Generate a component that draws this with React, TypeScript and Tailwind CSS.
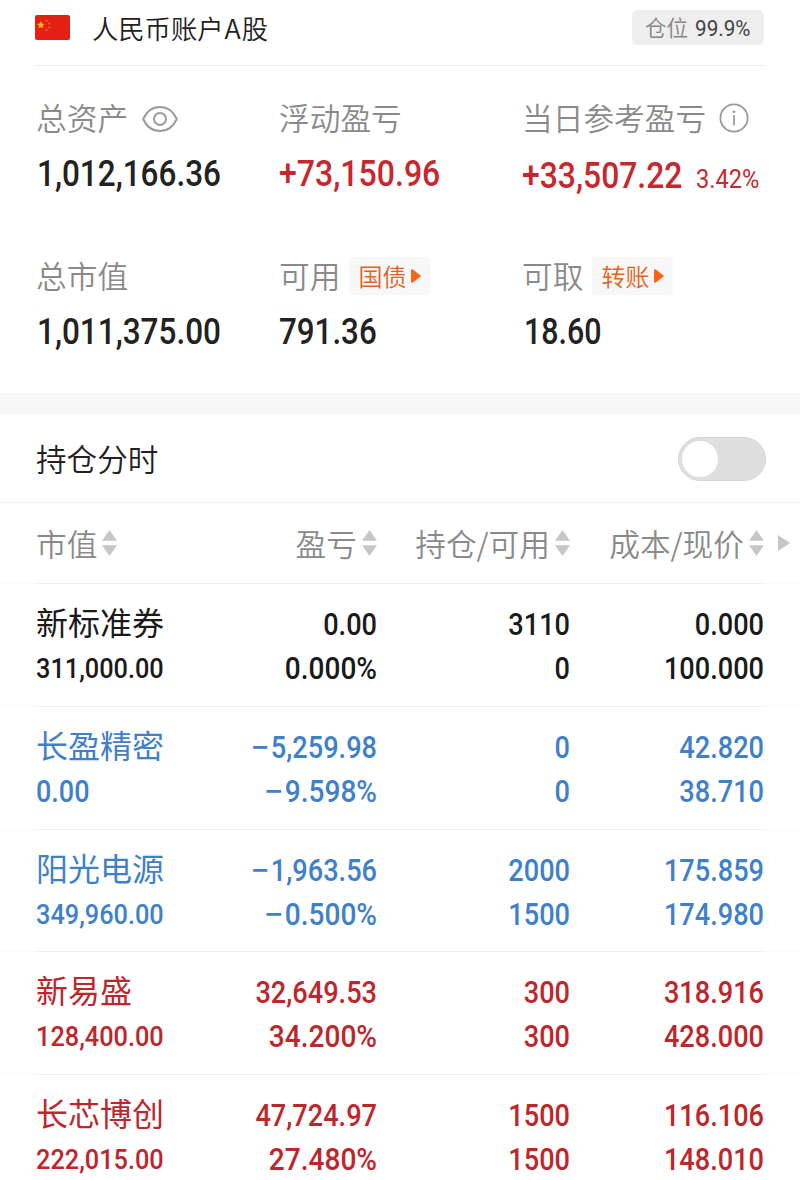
import { useState } from 'react';
import type { ReactNode } from 'react';

interface Holding {
  name: string;
  value: string;
  profit: string;
  profitRate: string;
  qty: string;
  available: string;
  cost: string;
  price: string;
  color: string;
}

const BLACK = 'text-[#1a1a1a]';
const BLUE = 'text-[#3f80cb]';
const RED = 'text-[#be262b]';

const holdings: Holding[] = [
  { name: '新标准券', value: '311,000.00', profit: '0.00', profitRate: '0.000%', qty: '3110', available: '0', cost: '0.000', price: '100.000', color: BLACK },
  { name: '长盈精密', value: '0.00', profit: '−5,259.98', profitRate: '−9.598%', qty: '0', available: '0', cost: '42.820', price: '38.710', color: BLUE },
  { name: '阳光电源', value: '349,960.00', profit: '−1,963.56', profitRate: '−0.500%', qty: '2000', available: '1500', cost: '175.859', price: '174.980', color: BLUE },
  { name: '新易盛', value: '128,400.00', profit: '32,649.53', profitRate: '34.200%', qty: '300', available: '300', cost: '318.916', price: '428.000', color: RED },
  { name: '长芯博创', value: '222,015.00', profit: '47,724.97', profitRate: '27.480%', qty: '1500', available: '1500', cost: '116.106', price: '148.010', color: RED },
];

function Flag() {
  return (
    <svg width="35" height="25" viewBox="0 0 35 25">
      <rect width="35" height="25" rx="2" fill="#e32013" />
      <path d="M5.800 6.100l1.100 2.500 2.600.3-1.900 1.800.5 2.600-2.300-1.300-2.300 1.300.5-2.600L2.100 8.900l2.600-.3z" fill="#fbb718" />
      <circle cx="11.6" cy="5.6" r="0.9" fill="#ee7a20" />
      <circle cx="14.2" cy="8.4" r="0.9" fill="#ee7a20" />
      <circle cx="14.2" cy="12.4" r="0.9" fill="#ee7a20" />
      <circle cx="11.6" cy="15.2" r="0.9" fill="#ee7a20" />
    </svg>
  );
}

function EyeIcon() {
  return (
    <svg width="36" height="28" viewBox="0 0 36 28" fill="none" stroke="#999" strokeWidth="1.9">
      <path d="M1.200 14C4.800 6 10.800 2 18 2s13.200 4 16.800 12C31.200 22 25.200 26 18 26S4.800 22 1.200 14z" />
      <circle cx="18" cy="14" r="6" />
    </svg>
  );
}

function InfoIcon() {
  return (
    <svg width="30" height="30" viewBox="0 0 30 30" fill="none" stroke="#999" strokeWidth="1.8">
      <circle cx="15" cy="15" r="13.6" />
      <path d="M15 12.300v10" />
      <circle cx="15" cy="8.700" r="1.300" fill="#999" stroke="none" />
    </svg>
  );
}

function SortIcon() {
  return (
    <svg width="15" height="26" viewBox="0 0 15 26" fill="#c6c6c6" className="shrink-0">
      <path d="M7.500 0L15 10.800H0z" />
      <path d="M7.500 26L0 15.200h15z" />
    </svg>
  );
}

function Tag({ children }: { children: ReactNode }) {
  return (
    <span className="ml-[9px] flex h-[38px] w-[81px] items-center rounded bg-[#f7f7f7] pl-[9px] text-2xl font-[350] leading-[34px] text-[#e4621f]">
      <span>{children}</span>
      <svg width="10" height="14" viewBox="0 0 10 14" className="ml-[5px] -mt-[1px]" fill="#fa6414">
        <path d="M0 1.500C0 .3 1 0 1.800.6L9.300 6.300q.7.700 0 1.400L1.800 13.400C1 14 0 13.700 0 12.500z" />
      </svg>
    </span>
  );
}

// One figure of the account summary: a grey label over a bold amount
function Stat({ label, amount, extra, color = 'text-[#222]' }: { label: string; amount: ReactNode; extra?: ReactNode; color?: string }) {
  return (
    <div>
      <div className="flex h-10 items-center text-[30.7px] font-[350] leading-10 text-[#8a8a8a]">
        <span className="-mt-[2px] whitespace-nowrap">{label}</span>
        {extra}
      </div>
      <div className={`mt-4 flex h-10 items-center whitespace-nowrap font-[Roboto] text-4xl font-medium leading-10 ${color}`}>
        {amount}
      </div>
    </div>
  );
}

function HeadCell({ children }: { children: ReactNode }) {
  return (
    <div className="flex items-center justify-end gap-[5px] whitespace-nowrap">
      <span className="-mt-px">{children}</span>
      <SortIcon />
    </div>
  );
}

// The minus sign is drawn wider than the font has it
function Digits({ text }: { text: string }) {
  if (text.startsWith('−')) {
    return (
      <>
        <span className="mr-[4px] inline-block origin-center scale-x-[1.25]">−</span>
        {text.slice(1)}
      </>
    );
  }
  return <>{text}</>;
}

function NumCell({ top, bottom }: { top: string; bottom: string }) {
  return (
    <div className="text-right font-[Roboto] text-[30.5px] font-medium leading-[44px]">
      <div className="origin-right scale-x-[0.89]"><Digits text={top} /></div>
      <div className={`origin-right ${bottom.endsWith('%') ? 'scale-x-[0.92]' : 'scale-x-[0.89]'}`}><Digits text={bottom} /></div>
    </div>
  );
}

// Hairline that is a little darker between the page margins
function Divider() {
  return (
    <div className="h-px bg-[#f8f8f8] px-9">
      <div className="h-px bg-[#efefef]"></div>
    </div>
  );
}

export default function App() {
  const [intraday, setIntraday] = useState(false);

  return (
    <div className="h-[1180px] w-[800px] overflow-hidden bg-white font-['Noto_Sans_CJK_SC',sans-serif]">
      {/* 账户标题 */}
      <header className="mx-9 flex h-[66px] items-start justify-between border-b border-[#ececec]">
        <div className="-ml-px flex h-[55px] items-center">
          <Flag />
          <span className="ml-[22px] text-[26.300px] font-[350] leading-10 text-[#222]">
            人民币账户<span className="mx-px text-[27px]">A</span>股
          </span>
        </div>
        <div className="mt-[10px] flex h-[35px] w-[132px] items-center rounded-md bg-[#eee] pl-[13px] text-[21.500px] leading-8">
          <span className="-mt-[2px] font-[350] text-[#858585]">仓位</span>
          <span className="ml-[7px] origin-left scale-x-[0.92] font-[Roboto] text-[22.500px] text-[#444]">99.9%</span>
        </div>
      </header>

      {/* 资产汇总 */}
      <section className="grid h-[327px] grid-cols-[243px_243px_1fr] grid-rows-[158px_1fr] pl-9 pt-8">
        <Stat label="总资产" amount={<span className="ml-px origin-left scale-x-[0.875]">1,012,166.36</span>} extra={<span className="ml-[14px] mt-px"><EyeIcon /></span>} />
        <Stat label="浮动盈亏" color="text-[#c8272d]" amount={<span className="origin-left scale-x-[0.89]">+73,150.96</span>} />
        <Stat
          label="当日参考盈亏"
          color="text-[#c8272d]"
          extra={<span className="ml-[13px]"><InfoIcon /></span>}
          amount={
            <span className="mt-[8px] flex items-baseline">
              <span className="w-[174px] origin-left scale-x-[0.885]">+33,507.22</span>
              <span className="origin-left scale-x-[0.945] text-[25px] font-normal">3.42%</span>
            </span>
          }
        />
        <Stat label="总市值" amount={<span className="ml-px origin-left scale-x-[0.875]">1,011,375.00</span>} />
        <Stat label="可用" amount={<span className="origin-left scale-x-[0.87]">791.36</span>} extra={<Tag>国债</Tag>} />
        <Stat label="可取" amount={<span className="ml-[2px] origin-left scale-x-[0.845]">18.60</span>} extra={<Tag>转账</Tag>} />
      </section>

      <div className="h-[21px] bg-[#f7f7f7]"></div>

      {/* 持仓分时开关 */}
      <section className="flex h-[88px] items-center justify-between pl-9 pr-[34px]">
        <h2 className="text-[30.600px] font-[350] leading-10 text-[#222]">持仓分时</h2>
        <button
          onClick={() => setIntraday(!intraday)}
          className={`mt-[2px] flex h-11 w-[88px] items-center rounded-full border border-[#d6d6d6] bg-[#dfdfdf] px-[3px] ${intraday ? 'justify-end' : 'justify-start'}`}
        >
          <span className="size-9 rounded-full bg-white"></span>
        </button>
      </section>
      <div className="h-px bg-[#f2f2f2]"></div>

      {/* 持仓表头 */}
      <div className="flex h-20 items-center pl-9 text-[30.700px] font-[350] leading-10 text-[#8a8a8a]">
        <div className="grid grid-cols-[150px_191px_193px_194px]">
          <div className="flex items-center gap-[5px]">
            <span className="-mt-px">市值</span>
            <SortIcon />
          </div>
          <HeadCell>盈亏</HeadCell>
          <HeadCell>持仓/可用</HeadCell>
          <HeadCell>成本/现价</HeadCell>
        </div>
        <svg width="12" height="16" viewBox="0 0 12 16" fill="#c6c6c6" className="ml-[14px]">
          <path d="M0 0l12 8L0 16z" />
        </svg>
      </div>
      <Divider />

      {/* 持仓列表 */}
      {holdings.map((item) => (
        <div key={item.name} className="h-[122.8px]">
          <div className={`grid h-[121.8px] grid-cols-[150px_191px_193px_194px] px-9 pt-[19px] ${item.color}`}>
            <div className="whitespace-nowrap">
              <div className="-mt-[5px] mb-[3px] text-[32px] leading-[46px]">{item.name}</div>
              <div className={`w-fit origin-left font-[Roboto] font-medium leading-[44px] ${item.value.length > 6 ? 'scale-x-[0.92] text-[27.5px]' : 'scale-x-[0.885] text-[30.5px]'}`}>
                {item.value}
              </div>
            </div>
            <NumCell top={item.profit} bottom={item.profitRate} />
            <NumCell top={item.qty} bottom={item.available} />
            <NumCell top={item.cost} bottom={item.price} />
          </div>
          <Divider />
        </div>
      ))}
    </div>
  );
}
